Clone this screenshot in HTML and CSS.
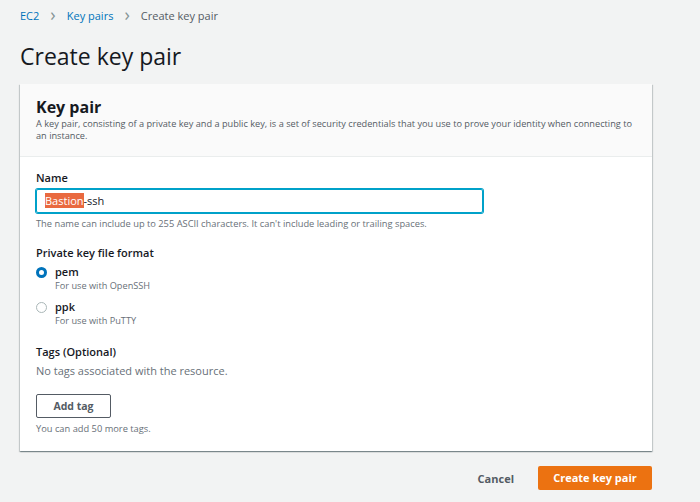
FILE: index.html
```html
<!DOCTYPE html>
<html lang="en">
  <head>
    <title>Create key pair</title>
    <link rel="stylesheet" href="styles.css">
  </head>
  <body>
    <div class="page">
      <div class="crumbs">
        <a class="crumb">EC2</a>
        <span class="sep">&#x203A;</span>
        <a class="crumb">Key pairs</a>
        <span class="sep">&#x203A;</span>
        <span class="current">Create key pair</span>
      </div>
      <h1 class="title">Create key pair</h1>

      <div class="card">
        <div class="card-head">
          <h2>Key pair</h2>
          <p>A key pair, consisting of a private key and a public key, is a set of security credentials that you use to prove your identity when connecting to an instance.</p>
        </div>
        <div class="card-body">
          <div class="field">
            <div class="label">Name</div>
            <div class="input"><span class="sel">Bastion</span>-ssh</div>
            <div class="hint">The name can include up to 255 ASCII characters. It can't include leading or trailing spaces.</div>
          </div>

          <div class="field">
            <div class="label">Private key file format</div>
            <div class="radio">
              <span class="dot on"></span>
              <div>
                <div class="opt">pem</div>
                <div class="sub">For use with OpenSSH</div>
              </div>
            </div>
            <div class="radio">
              <span class="dot"></span>
              <div>
                <div class="opt">ppk</div>
                <div class="sub">For use with PuTTY</div>
              </div>
            </div>
          </div>

          <div class="field">
            <div class="label">Tags (Optional)</div>
            <div class="empty">No tags associated with the resource.</div>
            <div class="btn-add">Add tag</div>
            <div class="hint">You can add 50 more tags.</div>
          </div>
        </div>
      </div>

      <div class="actions">
        <span class="cancel">Cancel</span>
        <span class="primary">Create key pair</span>
      </div>
    </div>
  </body>
</html>
```

FILE: styles.css
```css
* {
  box-sizing: border-box;
}
body {
  margin: 0;
  background: #f2f3f3;
  font-family: "Open Sans", "Noto Sans", sans-serif;
  color: #16191f;
}
.page {
  width: 652px;
  padding: 6px 0 0 20px;
}
.crumbs {
  display: flex;
  align-items: center;
  font-size: 11px;
  height: 18px;
}
.crumb {
  color: #0073bb;
}
.sep {
  color: #879596;
  font-size: 18px;
  margin: -3px 11px 0 11px;
}
.current {
  color: #545b64;
}
.title {
  font-size: 23px;
  font-weight: 400;
  margin: 17px 0 0 0;
  line-height: 30px;
}
.card {
  margin-top: 13px;
  background: #fff;
  box-shadow: 0 1px 1px 0 rgba(0, 28, 36, 0.3), 1px 1px 1px 0 rgba(0, 28, 36, 0.15), -1px 1px 1px 0 rgba(0, 28, 36, 0.15);
}
.card-head {
  background: #fafafa;
  border-bottom: 1px solid #eaeded;
  padding: 12px 16px 12px 16px;
  height: 73px;
}
.card-head h2 {
  margin: 0;
  font-size: 16px;
  font-weight: 700;
  line-height: 22px;
}
.card-head p {
  margin: 0;
  font-size: 9.2px;
  line-height: 11.5px;
  color: #545b64;
}
.card-body {
  padding: 13px 16px 16px 16px;
}
.field {
  margin-bottom: 17px;
}
.field:first-child {
  margin-bottom: 15px;
}
.field:last-child {
  margin-bottom: 0;
}
.label {
  font-size: 11px;
  font-weight: 600;
  line-height: 16px;
  margin-bottom: 3px;
}
.input {
  width: 447px;
  height: 24px;
  border: 1px solid #00a1c9;
  border-radius: 2px;
  box-shadow: 0 0 0 1px #00a1c9;
  font-size: 11px;
  padding: 3px 8px 0 8px;
  line-height: 16px;
}
.sel {
  background: #e9693f;
  color: #fff;
}
.hint {
  font-size: 9.3px;
  color: #687078;
  margin-top: 4px;
  line-height: 13px;
}
.radio {
  display: flex;
  gap: 8px;
  margin-top: 3px;
  margin-bottom: 7px;
}
.dot {
  width: 11px;
  height: 11px;
  border-radius: 50%;
  border: 1.5px solid #aab7b8;
  margin-top: 3px;
  flex-shrink: 0;
}
.dot.on {
  border: 3.5px solid #0073bb;
}
.opt {
  font-size: 11px;
  line-height: 16px;
  font-weight: 600;
}
.sub {
  font-size: 9.2px;
  line-height: 12px;
  color: #687078;
}
.empty {
  font-size: 11px;
  color: #687078;
  margin-top: 3px;
}
.btn-add {
  margin-top: 16px;
  width: 75px;
  height: 24px;
  border: 1px solid #545b64;
  border-radius: 2px;
  font-size: 10.5px;
  font-weight: 700;
  color: #545b64;
  text-align: center;
  line-height: 22px;
}
.actions {
  display: flex;
  justify-content: flex-end;
  align-items: center;
  margin-top: 15px;
  gap: 24px;
}
.cancel {
  font-size: 11px;
  font-weight: 700;
  color: #545b64;
}
.primary {
  background: #ec7211;
  color: #fff;
  font-size: 11px;
  font-weight: 700;
  width: 114px;
  height: 24px;
  line-height: 24px;
  text-align: center;
  border-radius: 2px;
}
```
